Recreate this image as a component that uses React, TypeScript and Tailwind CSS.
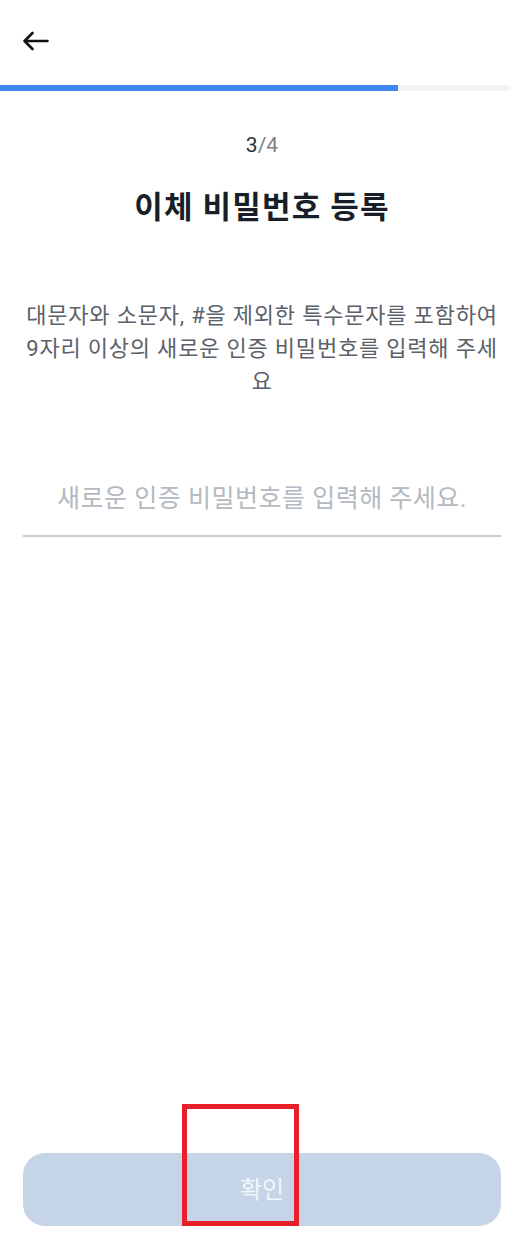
import { useState } from "react";

const font = { fontFamily: 'Roboto, "Noto Sans CJK KR", sans-serif' };

const BackArrow = () => (
  <svg width="27" height="20" viewBox="0 0 27 20" fill="none">
    <path
      d="M25.5 10H2.5M10.5 2L2.5 10L10.5 18"
      stroke="#111"
      strokeWidth="2.6"
      strokeLinecap="round"
      strokeLinejoin="round"
    />
  </svg>
);

const App = () => {
  const [password, setPassword] = useState("");

  return (
    <div className="relative h-screen overflow-hidden flex flex-col bg-white" style={font}>
      {/* header */}
      <div className="h-[85px] flex items-center pl-[22px] pb-[3px]">
        <button className="p-0">
          <BackArrow />
        </button>
      </div>

      {/* progress */}
      <div className="h-[6px] bg-[#f2f3f5]">
        <div className="h-full w-[398px] bg-[#3c86f0]" />
      </div>

      <div className="flex-1 flex flex-col pl-[15px]">
        <div className="mt-[42px] text-center text-[21px] leading-[24px]">
          <span className="text-[#2b2f36]">3</span>
          <span className="text-[#7a8088]">/4</span>
        </div>

        <h1 className="mt-[31px] text-center text-[31px] leading-[40px] font-bold tracking-[1.2px] text-[#191f28]">
          이체 비밀번호 등록
        </h1>

        <p className="mt-[71px] mx-auto w-[474px] text-center text-[22px] leading-[33px] tracking-[0.8px] text-[#5b6168]">
          대문자와 소문자, #을 제외한 특수문자를 포함하여 9자리 이상의 새로운 인증 비밀번호를 입력해 주세요
        </p>

        {/* input */}
        <div className="mt-[85px] mx-[8px] border-b-2 border-[#c8ccd1] pb-[20px]">
          <input
            type="password"
            value={password}
            onChange={(e) => setPassword(e.target.value)}
            placeholder="새로운 인증 비밀번호를 입력해 주세요."
            className="w-full text-center text-[25px] leading-[32px] h-[32px] tracking-[0.5px] outline-none bg-transparent placeholder:text-[#b3b9c0]"
            style={font}
          />
        </div>

        <div className="flex-1" />

        {/* confirm */}
        <div className="px-[8px] pb-[27px]">
          <button
            disabled
            className="w-full h-[73px] rounded-[22px] bg-[#c5d4e6] text-[24px] text-[#f3f6fa]"
          >
            확인
          </button>
        </div>
      </div>

      {/* annotation box */}
      <div className="absolute left-[182px] top-[1104px] w-[117px] h-[122px] border-[5px] border-[#e8202a]" />
    </div>
  );
};

export default App;
